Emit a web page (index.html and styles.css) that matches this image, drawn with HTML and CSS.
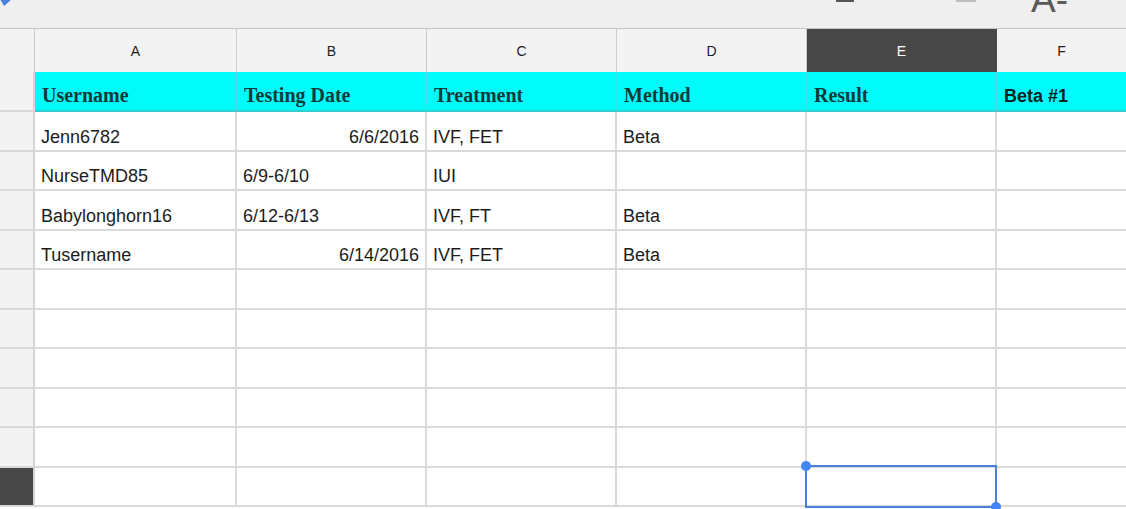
FILE: index.html
```html
<!DOCTYPE html>
<html>
<head>
<meta charset="utf-8">
<link rel="stylesheet" href="styles.css">
</head>
<body>
<div class="toolbar">
  <div class="tool-left"><svg class="diamond" width="14" height="8" viewBox="0 0 14 8"><path d="M0 0 L12 0 L4 7 Z" fill="#4a80e2"/></svg></div>
  <div class="tool-right">
    <span class="dash dark"></span>
    <span class="dash light"></span>
    <span class="font-size">A-</span>
  </div>
</div>
<div class="sheet">
  <div class="corner"></div>
  <div class="colhead">A</div>
  <div class="colhead">B</div>
  <div class="colhead">C</div>
  <div class="colhead">D</div>
  <div class="colhead active">E</div>
  <div class="colhead last">F</div>

  <div class="rowhead"></div>
  <div class="hcell serif">Username</div>
  <div class="hcell serif">Testing Date</div>
  <div class="hcell serif">Treatment</div>
  <div class="hcell serif">Method</div>
  <div class="hcell serif">Result</div>
  <div class="hcell sans last">Beta #1</div>

  <div class="rowhead"></div>
  <div class="cell">Jenn6782</div>
  <div class="cell right">6/6/2016</div>
  <div class="cell">IVF, FET</div>
  <div class="cell">Beta</div>
  <div class="cell"></div>
  <div class="cell last"></div>

  <div class="rowhead"></div>
  <div class="cell">NurseTMD85</div>
  <div class="cell">6/9-6/10</div>
  <div class="cell">IUI</div>
  <div class="cell"></div>
  <div class="cell"></div>
  <div class="cell last"></div>

  <div class="rowhead"></div>
  <div class="cell">Babylonghorn16</div>
  <div class="cell">6/12-6/13</div>
  <div class="cell">IVF, FT</div>
  <div class="cell">Beta</div>
  <div class="cell"></div>
  <div class="cell last"></div>

  <div class="rowhead"></div>
  <div class="cell">Tusername</div>
  <div class="cell right">6/14/2016</div>
  <div class="cell">IVF, FET</div>
  <div class="cell">Beta</div>
  <div class="cell"></div>
  <div class="cell last"></div>

  <div class="rowhead"></div><div class="cell"></div><div class="cell"></div><div class="cell"></div><div class="cell"></div><div class="cell"></div><div class="cell last"></div>
  <div class="rowhead"></div><div class="cell"></div><div class="cell"></div><div class="cell"></div><div class="cell"></div><div class="cell"></div><div class="cell last"></div>
  <div class="rowhead"></div><div class="cell"></div><div class="cell"></div><div class="cell"></div><div class="cell"></div><div class="cell"></div><div class="cell last"></div>
  <div class="rowhead"></div><div class="cell"></div><div class="cell"></div><div class="cell"></div><div class="cell"></div><div class="cell"></div><div class="cell last"></div>
  <div class="rowhead"></div><div class="cell"></div><div class="cell"></div><div class="cell"></div><div class="cell"></div><div class="cell"></div><div class="cell last"></div>

  <div class="rowhead active"></div>
  <div class="cell"></div>
  <div class="cell"></div>
  <div class="cell"></div>
  <div class="cell"></div>
  <div class="cell selected"><div class="sel-box"><span class="knob tl"></span><span class="knob br"></span></div></div>
  <div class="cell last"></div>
</div>
</body>
</html>
```

FILE: styles.css
```css
html, body {
  margin: 0;
  padding: 0;
  width: 1126px;
  height: 509px;
  overflow: hidden;
  background: #ffffff;
  font-family: "Liberation Sans", Arial, sans-serif;
  color: #222222;
}

.toolbar {
  height: 28px;
  background: #efefef;
  border-bottom: 1px solid #c4c4c4;
  display: flex;
  justify-content: space-between;
  overflow: hidden;
}

.tool-left {
  display: flex;
  align-items: flex-start;
}

.diamond {
  display: block;
  margin-top: -1px;
}

.tool-right {
  display: flex;
  align-items: flex-start;
  padding-right: 58px;
}

.dash {
  display: block;
  height: 2px;
}

.dash.dark {
  background: #555555;
  width: 18px;
  margin-right: 102px;
}

.dash.light {
  background: #bdbdbd;
  width: 20px;
  margin-right: 55px;
}

.font-size {
  font-family: "Liberation Sans", Arial, sans-serif;
  font-size: 37px;
  line-height: 36px;
  margin-top: -18px;
  color: #5a5a5a;
}

.sheet {
  display: grid;
  grid-template-columns: 35px 202px 190px 190px 190px 190px 1fr;
  grid-template-rows: 43px 40px repeat(10, 39.5px);
}

.corner,
.colhead {
  background: #f3f3f3;
  box-sizing: border-box;
  border-right: 1px solid #c9c9c9;
}

.colhead {
  display: flex;
  align-items: center;
  justify-content: center;
  font-size: 14px;
  color: #1e1e1e;
  padding-top: 1px;
}

.colhead.active {
  background: #474747;
  color: #ffffff;
  border-right-color: #474747;
}

.colhead.last,
.cell.last,
.hcell.last {
  border-right: none;
}

.rowhead {
  background: #f3f3f3;
  box-sizing: border-box;
  border-right: 2px solid #d6d6d6;
  border-bottom: 2px solid #d9d9d9;
}

.rowhead.active {
  background: #474747;
  border-right-color: #d6d6d6;
}

.hcell {
  background: #00fbfb;
  box-sizing: border-box;
  border-right: 1px solid #40e0e0;
  border-bottom: 2px solid #2fcfd0;
  display: flex;
  align-items: flex-end;
  padding: 0 6px 4px 7px;
  color: #0e3a3a;
  white-space: nowrap;
}

.hcell.serif {
  font-family: "Liberation Serif", "Times New Roman", serif;
  font-weight: bold;
  font-size: 20px;
  line-height: 24px;
  padding-bottom: 3px;
}

.hcell.sans {
  font-weight: bold;
  font-size: 18px;
  line-height: 22px;
  color: #0a2222;
  padding-bottom: 3px;
}

.cell {
  box-sizing: border-box;
  border-right: 2px solid #dadada;
  border-bottom: 2px solid #dadada;
  display: flex;
  align-items: flex-end;
  padding: 0 6px 2px 6px;
  font-size: 18px;
  line-height: 22px;
  color: #1c1c1c;
  white-space: nowrap;
}

.cell.right {
  justify-content: flex-end;
}

.cell.selected {
  position: relative;
}

.sel-box {
  position: absolute;
  left: -2px;
  top: -3px;
  width: 192px;
  height: 43px;
  box-sizing: border-box;
  border: 2px solid #4d7fd6;
}

.knob {
  position: absolute;
  width: 10px;
  height: 10px;
  border-radius: 50%;
  background: #4285f4;
}

.knob.tl {
  left: -6px;
  top: -6px;
}

.knob.br {
  right: -6px;
  bottom: -6px;
}
```
